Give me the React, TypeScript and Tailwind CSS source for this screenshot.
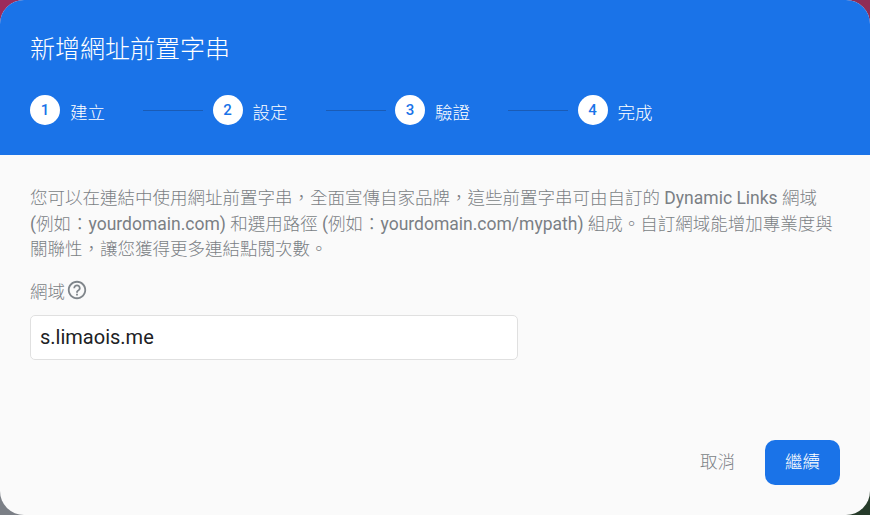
import { MdHelpOutline } from 'react-icons/md'

const font = "font-['Roboto','Noto_Sans_CJK_TC_Light','Noto_Sans_CJK_TC',sans-serif]"

const steps = ['建立', '設定', '驗證', '完成']

// full-width punctuation, written as escapes so it stays full-width
const comma = '\uFF0C'
const colon = '\uFF1A'

export default function App() {
  return (
    <div
      className={`h-[515px] w-[870px] overflow-hidden bg-[conic-gradient(#8f2c55_0_25%,#263b2a_25%_50%,#7b7f86_50%_75%,#9c2a5a_75%_100%)] ${font}`}
    >
      <div className="flex h-full flex-col overflow-hidden rounded-[24px] bg-[#fafafa]">
        <header className="h-[155px] shrink-0 bg-[#1a73e8] pt-[34px] pl-[30px] text-white">
          <h1 className="text-[25px] leading-[32px] font-normal">新增網址前置字串</h1>
          <ol className="mt-[29px] flex items-center">
            {steps.map((label, i) => (
              <li key={label} className="flex w-[182.5px] items-center">
                <span className="flex h-[30px] w-[30px] shrink-0 items-center justify-center rounded-full bg-white text-[15px] font-medium text-[#1a73e8]">
                  {i + 1}
                </span>
                <span className="mt-[5px] ml-[10px] w-[35px] shrink-0 text-[17.5px] leading-[24px]">{label}</span>
                {i < steps.length - 1 && <span className="ml-[38px] h-px w-[60px] bg-[#1a5bb5]" />}
              </li>
            ))}
          </ol>
        </header>

        <main className="flex flex-1 flex-col pt-[31px] pr-[30px] pl-[30px]">
          <p className="text-[17.5px] leading-[25.5px] text-[#7a7f85]">
            您可以在連結中使用網址前置字串{comma}全面宣傳自家品牌{comma}這些前置字串可由自訂的 Dynamic Links 網域 (例如{colon}yourdomain.com) 和選用路徑 (例如{colon}yourdomain.com/mypath) 組成。自訂網域能增加專業度與關聯性{comma}讓您獲得更多連結點閱次數。
          </p>
          <div className="mt-[16px] flex items-center gap-[1px] text-[17.5px] leading-[24px] text-[#7a7f85]">
            <span>網域</span>
            <MdHelpOutline className="mb-[4px] h-[22px] w-[22px] text-[#80868b]" aria-hidden />
          </div>
          <input
            readOnly
            value="s.limaois.me"
            className="mt-[10px] h-[45px] w-[488px] rounded-[5px] border border-[#e0e0e0] bg-white px-[9px] text-[20px] text-[#202124] outline-none"
          />
          <div className="mt-auto mb-[30px] flex items-center justify-end gap-[30px]">
            <button className="text-[17.5px] text-[#7a7f85]">取消</button>
            <button className="h-[45px] w-[75px] rounded-[10px] bg-[#1a73e8] text-[17.5px] text-white">繼續</button>
          </div>
        </main>
      </div>
    </div>
  )
}
